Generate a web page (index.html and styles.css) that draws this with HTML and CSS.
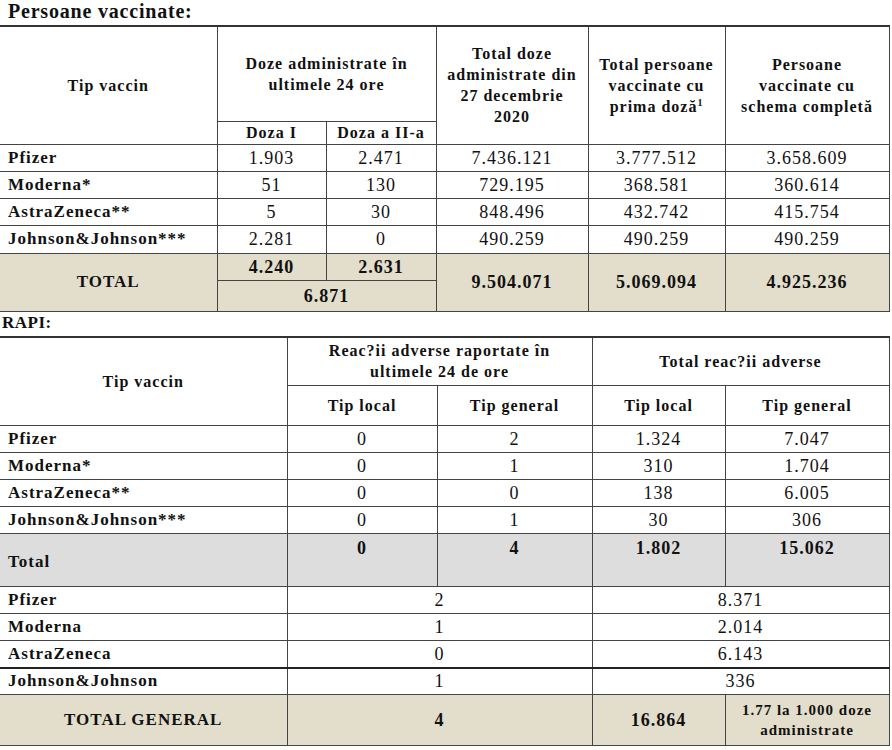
FILE: index.html
```html
<!DOCTYPE html>
<html lang="ro">
<head>
<meta charset="utf-8">
<title>Persoane vaccinate</title>
<link rel="stylesheet" href="styles.css">
</head>
<body>
<h1 class="title">Persoane vaccinate:</h1>
<table class="grid grid-vacc">
  <colgroup>
    <col class="c-a"><col class="c-b"><col class="c-c"><col class="c-d"><col class="c-e"><col class="c-f">
  </colgroup>
  <tr class="h1">
    <th rowspan="2" class="first">Tip vaccin</th>
    <th colspan="2">Doze administrate în<br>ultimele 24 ore</th>
    <th rowspan="2">Total doze<br>administrate din<br>27 decembrie<br>2020</th>
    <th rowspan="2">Total persoane<br>vaccinate cu<br>prima doză<sup>1</sup></th>
    <th rowspan="2">Persoane<br>vaccinate cu<br>schema completă</th>
  </tr>
  <tr class="h2">
    <th>Doza I</th>
    <th>Doza a II-a</th>
  </tr>
  <tr class="row">
    <td class="first name">Pfizer</td><td>1.903</td><td>2.471</td><td>7.436.121</td><td>3.777.512</td><td>3.658.609</td>
  </tr>
  <tr class="row">
    <td class="first name">Moderna*</td><td>51</td><td>130</td><td>729.195</td><td>368.581</td><td>360.614</td>
  </tr>
  <tr class="row">
    <td class="first name">AstraZeneca**</td><td>5</td><td>30</td><td>848.496</td><td>432.742</td><td>415.754</td>
  </tr>
  <tr class="row row-last">
    <td class="first name">Johnson&amp;Johnson***</td><td>2.281</td><td>0</td><td>490.259</td><td>490.259</td><td>490.259</td>
  </tr>
  <tr class="tot1 beige">
    <td rowspan="2" class="first label">TOTAL</td><td class="b">4.240</td><td class="b">2.631</td>
    <td rowspan="2" class="b">9.504.071</td><td rowspan="2" class="b">5.069.094</td><td rowspan="2" class="b">4.925.236</td>
  </tr>
  <tr class="tot2 beige">
    <td colspan="2" class="b">6.871</td>
  </tr>
</table>

<h2 class="subtitle">RAPI:</h2>
<table class="grid grid-rapi">
  <colgroup>
    <col class="r-a"><col class="r-b"><col class="r-c"><col class="r-d"><col class="r-e">
  </colgroup>
  <tr class="rh1">
    <th rowspan="2" class="first">Tip vaccin</th>
    <th colspan="2" class="tight">Reac?ii adverse raportate în<br>ultimele 24 de ore</th>
    <th colspan="2">Total reac?ii adverse</th>
  </tr>
  <tr class="rh2">
    <th>Tip local</th><th>Tip general</th><th>Tip local</th><th>Tip general</th>
  </tr>
  <tr class="row">
    <td class="first name">Pfizer</td><td>0</td><td>2</td><td>1.324</td><td>7.047</td>
  </tr>
  <tr class="row">
    <td class="first name">Moderna*</td><td>0</td><td>1</td><td>310</td><td>1.704</td>
  </tr>
  <tr class="row">
    <td class="first name">AstraZeneca**</td><td>0</td><td>0</td><td>138</td><td>6.005</td>
  </tr>
  <tr class="row">
    <td class="first name">Johnson&amp;Johnson***</td><td>0</td><td>1</td><td>30</td><td>306</td>
  </tr>
  <tr class="rtot gray">
    <td class="first name mid">Total</td><td class="b top">0</td><td class="b top">4</td><td class="b top">1.802</td><td class="b top">15.062</td>
  </tr>
  <tr class="row">
    <td class="first name">Pfizer</td><td colspan="2">2</td><td colspan="2">8.371</td>
  </tr>
  <tr class="row">
    <td class="first name">Moderna</td><td colspan="2">1</td><td colspan="2">2.014</td>
  </tr>
  <tr class="row thick">
    <td class="first name">AstraZeneca</td><td colspan="2">0</td><td colspan="2">6.143</td>
  </tr>
  <tr class="row">
    <td class="first name">Johnson&amp;Johnson</td><td colspan="2">1</td><td colspan="2">336</td>
  </tr>
  <tr class="gen beige">
    <td class="first label">TOTAL GENERAL</td><td colspan="2" class="b">4</td><td class="b">16.864</td>
    <td class="b small">1.77 la 1.000 doze<br>administrate</td>
  </tr>
</table>
</body>
</html>
```
FILE: styles.css
```css
html, body {
  margin: 0;
  padding: 0;
  background: #ffffff;
}
body {
  width: 892px;
  height: 750px;
  overflow: hidden;
  font-family: "Liberation Serif", "Times New Roman", serif;
  color: #111111;
}
.title {
  margin: 0;
  padding: 0 0 0 8px;
  height: 25px;
  font-size: 20px;
  line-height: 22px;
  font-weight: bold;
  letter-spacing: 0.8px;
}
.subtitle {
  margin: 0;
  padding: 0 0 0 2px;
  height: 24px;
  font-size: 17px;
  line-height: 22px;
  font-weight: bold;
  letter-spacing: 0.5px;
}
.grid {
  border-collapse: collapse;
  table-layout: fixed;
  width: 889px;
  border-top: 2px solid #333333;
}
.grid th,
.grid td {
  border: 1px solid #444444;
  padding: 0;
  text-align: center;
  vertical-align: middle;
  letter-spacing: 1px;
}
.grid .first {
  border-left: none;
}
.grid th {
  font-size: 16px;
  line-height: 21px;
  font-weight: bold;
}
.grid td {
  font-size: 18px;
  line-height: 22px;
  font-weight: normal;
}
.grid td.name {
  text-align: left;
  padding-left: 8px;
  font-size: 17px;
  font-weight: bold;
}
.grid td.label {
  font-size: 17px;
  font-weight: bold;
}
.grid td.b {
  font-weight: bold;
}
.grid td.small {
  font-size: 15px;
  line-height: 20px;
}
.grid sup {
  font-size: 10px;
  line-height: 0;
  vertical-align: 6px;
}

/* vaccinated table columns */
.c-a { width: 217px; }
.c-b { width: 109px; }
.c-c { width: 110px; }
.c-d { width: 152px; }
.c-e { width: 137px; }
.c-f { width: 164px; }

.h1 { height: 95px; }
.h2 { height: 23px; }
.row { height: 27px; }
.row-last { height: 28px; }
.tot1 { height: 27px; }
.tot2 { height: 31px; }

.beige td { background: #e2decb; }
.gray td { background: #dddddd; }

/* RAPI columns */
.r-a { width: 287px; }
.r-b { width: 150px; }
.r-c { width: 155px; }
.r-d { width: 133px; }
.r-e { width: 164px; }

.rh1 { height: 49px; }
.rh2 { height: 40px; }
.rtot { height: 53px; }
.grid td.top {
  vertical-align: top;
  padding-top: 3px;
}
.grid td.mid {
  vertical-align: middle;
  padding-top: 4px;
}
.thick td { border-bottom: 2px solid #222222; }
.gen { height: 51px; }
```
